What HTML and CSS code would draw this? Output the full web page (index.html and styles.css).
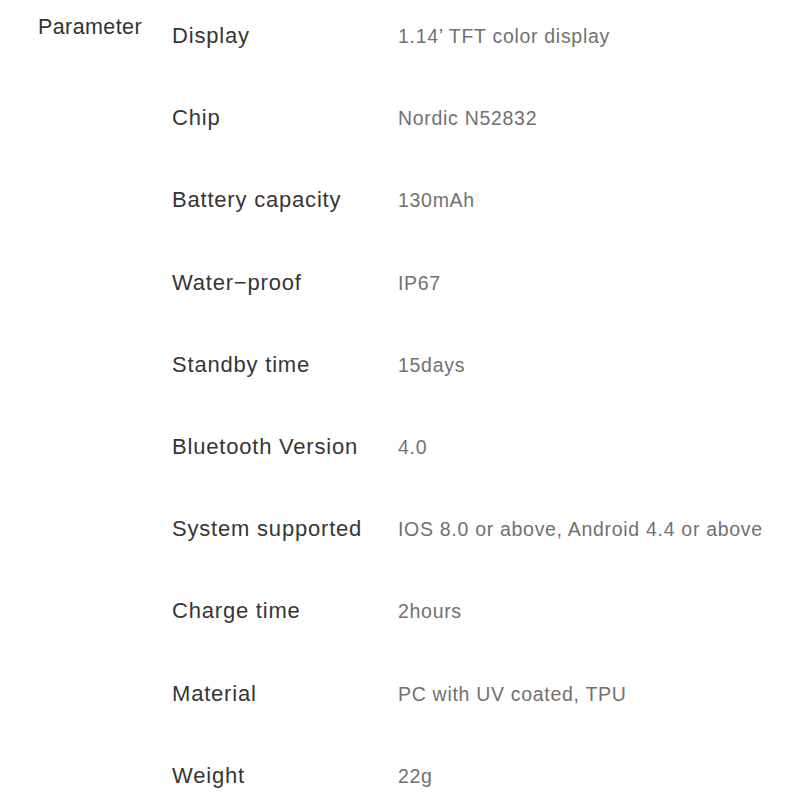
FILE: index.html
```html
<!DOCTYPE html>
<html>
<head>
<meta charset="utf-8">
<link rel="stylesheet" href="styles.css">
</head>
<body>
<div class="page">
  <div class="heading">Parameter</div>
  <div class="table">
    <div class="row"><div class="label">Display</div><div class="value">1.14’ TFT color display</div></div>
    <div class="row"><div class="label">Chip</div><div class="value">Nordic N52832</div></div>
    <div class="row"><div class="label">Battery capacity</div><div class="value">130mAh</div></div>
    <div class="row"><div class="label">Water−proof</div><div class="value">IP67</div></div>
    <div class="row"><div class="label">Standby time</div><div class="value">15days</div></div>
    <div class="row"><div class="label">Bluetooth Version</div><div class="value">4.0</div></div>
    <div class="row"><div class="label">System supported</div><div class="value">IOS 8.0 or above, Android 4.4 or above</div></div>
    <div class="row"><div class="label">Charge time</div><div class="value">2hours</div></div>
    <div class="row"><div class="label">Material</div><div class="value">PC with UV coated, TPU</div></div>
    <div class="row"><div class="label">Weight</div><div class="value">22g</div></div>
  </div>
</div>
</body>
</html>
```

FILE: styles.css
```css
html, body {
  margin: 0;
  padding: 0;
  background: #ffffff;
}
.page {
  display: flex;
  align-items: flex-start;
  font-family: "Liberation Sans", Arial, sans-serif;
  width: 800px;
  height: 800px;
  overflow: hidden;
}
.heading {
  width: 134px;
  padding-left: 38px;
  padding-top: 14px;
  font-size: 21.5px;
  line-height: 26px;
  color: #333333;
  letter-spacing: 0.4px;
  flex-shrink: 0;
}
.table {
  padding-top: 23px;
  display: flex;
  flex-direction: column;
}
.row {
  height: 82.2px;
  flex-shrink: 0;
  display: grid;
  grid-template-columns: 226px auto;
  align-items: baseline;
  align-content: start;
}
.label {
  font-size: 22px;
  line-height: 26px;
  color: #363636;
  letter-spacing: 0.8px;
}
.value {
  font-size: 19.5px;
  line-height: 26px;
  color: #717171;
  letter-spacing: 0.7px;
}
```
